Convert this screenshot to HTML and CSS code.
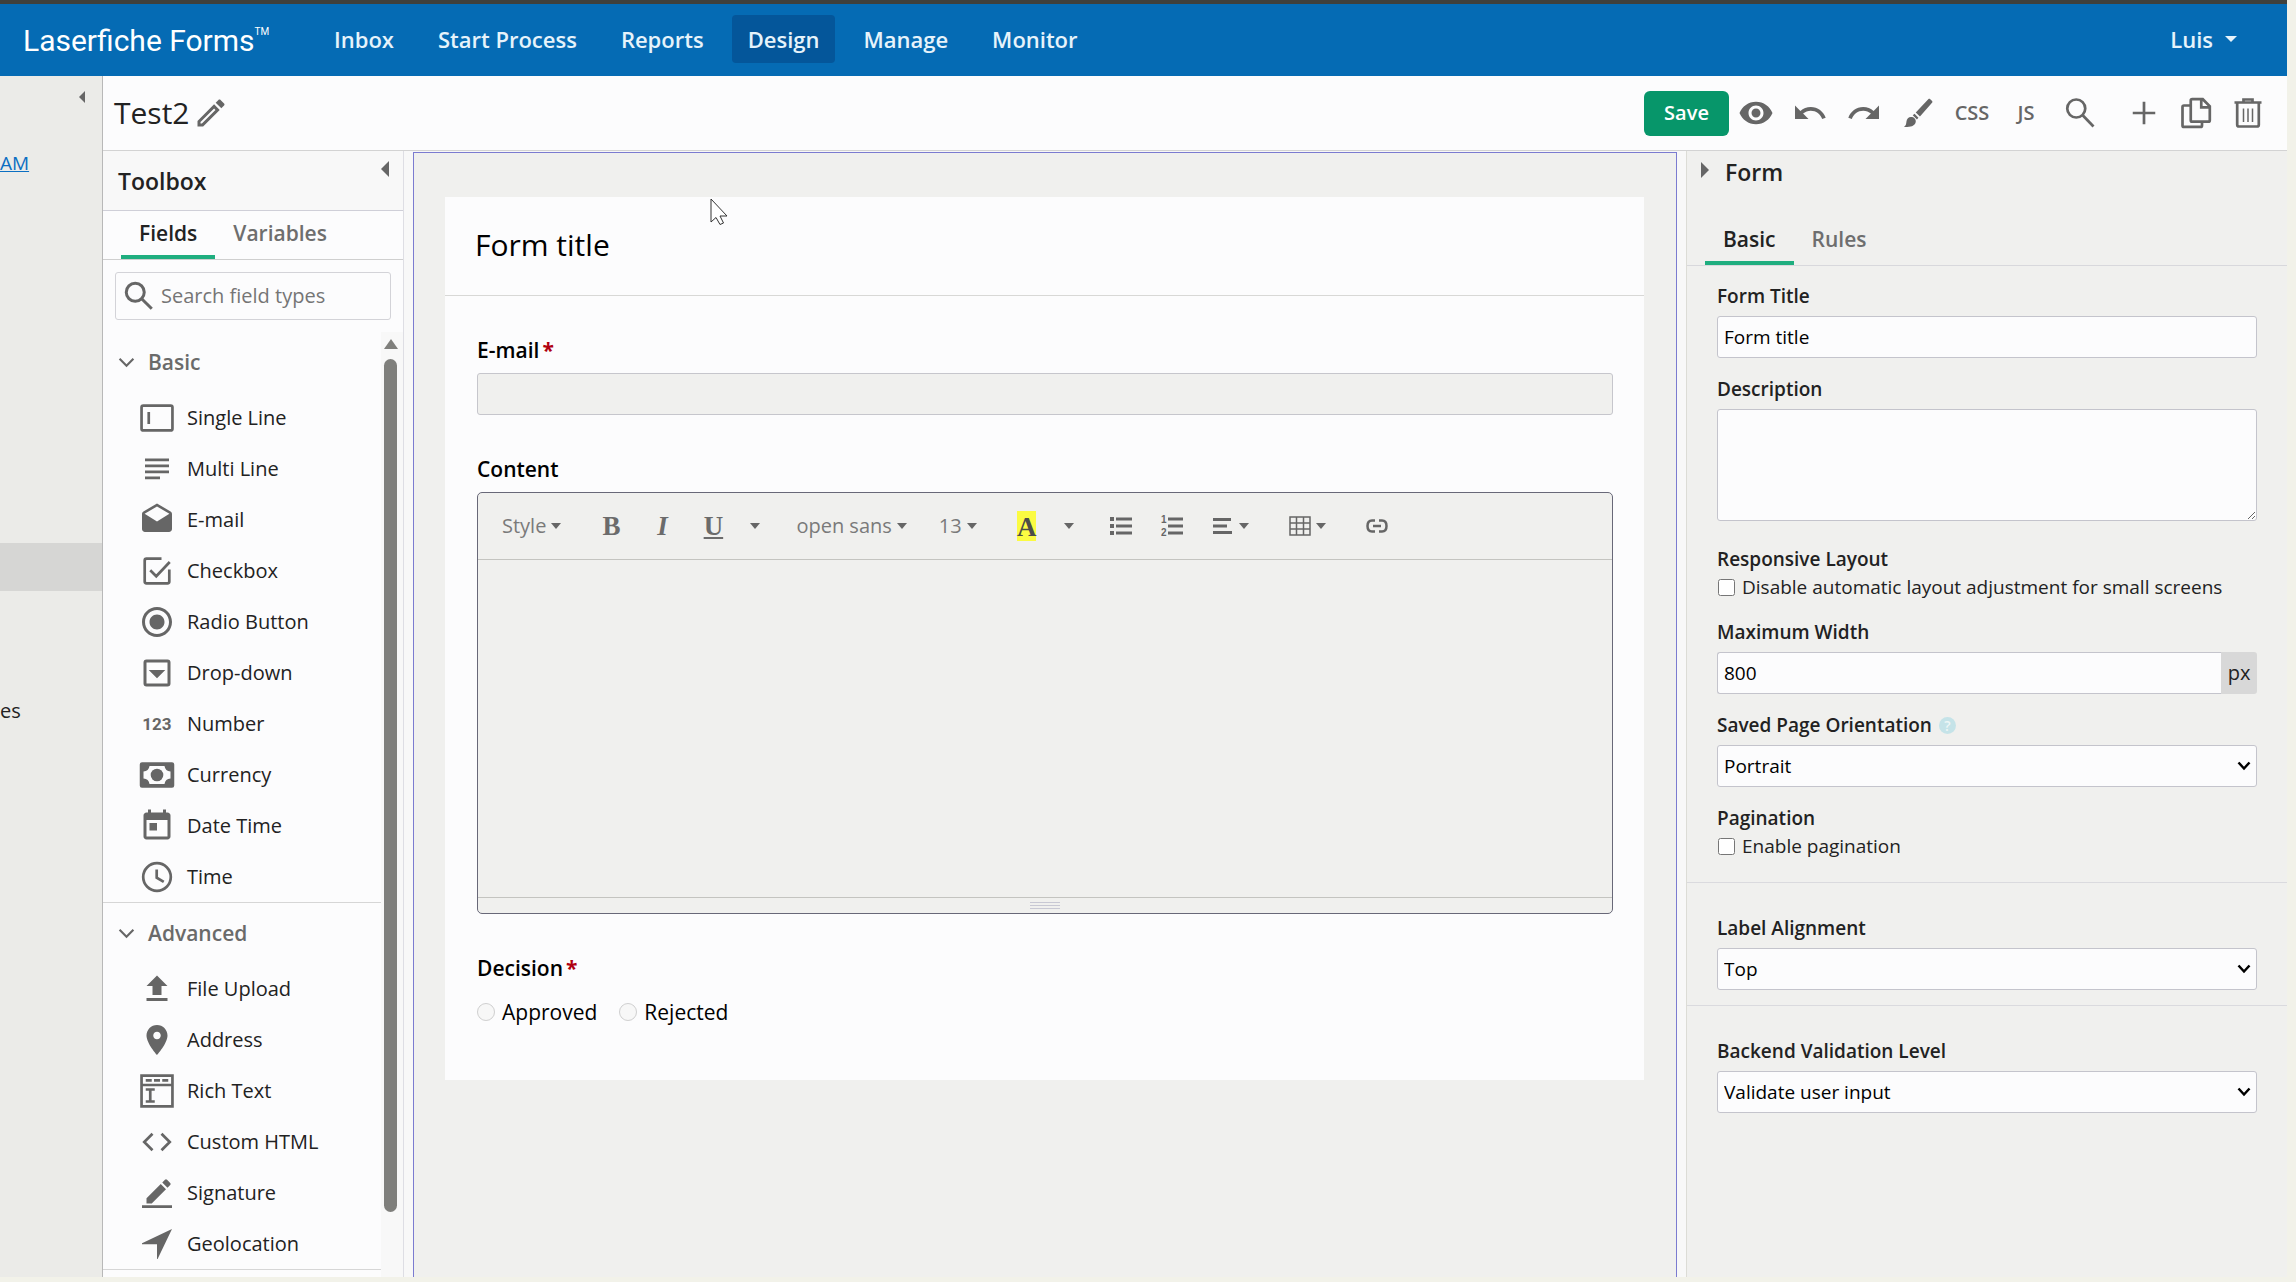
FILE: index.html
```html
<!DOCTYPE html>
<html lang="en">
<head>
    <meta charset="UTF-8">
    <meta name="viewport" content="width=device-width, initial-scale=1.0">
    <title>Laserfiche Forms - Test2</title>
    <link rel="stylesheet" href="styles.css">
</head>
<body>
    <div class="app">
        <header class="topbar">
            <a class="logo" href="#">Laserfiche Forms<sup>TM</sup></a>
            <nav class="nav">
                <a href="#">Inbox</a>
                <a href="#">Start Process</a>
                <a href="#">Reports</a>
                <a href="#" class="active">Design</a>
                <a href="#">Manage</a>
                <a href="#">Monitor</a>
            </nav>
            <button class="user">Luis <span class="caret"></span></button>
        </header>

        <div class="main">
            <!-- collapsed process list -->
            <aside class="drawer">
                <button class="arrow-left small" aria-label="Collapse"></button>
                <a class="drawer-link" href="#">AM</a>
                <div class="drawer-selected"></div>
                <span class="drawer-text">es</span>
            </aside>

            <div class="designer">
                <div class="titlebar">
                    <h1>Test2</h1>
                    <button class="icon-btn rename" aria-label="Rename">
                        <svg viewBox="0 0 24 24"><path d="M14.06 9.02l.92.92L5.92 19H5v-.92l9.06-9.06M17.66 3c-.25 0-.51.1-.7.29l-1.83 1.83 3.75 3.75 1.83-1.83c.39-.39.39-1.02 0-1.41l-2.34-2.34c-.2-.2-.45-.29-.71-.29zm-3.6 3.19L3 17.25V21h3.75L17.81 9.94l-3.75-3.75z"/></svg>
                    </button>
                    <div class="actions">
                        <button class="save">Save</button>
                        <button class="icon-btn" aria-label="Preview">
                            <svg viewBox="0 0 24 24"><path d="M12 4.5C7 4.5 2.73 7.61 1 12c1.73 4.39 6 7.5 11 7.5s9.27-3.11 11-7.5c-1.73-4.39-6-7.5-11-7.5zM12 17c-2.76 0-5-2.24-5-5s2.24-5 5-5 5 2.24 5 5-2.24 5-5 5zm0-8c-1.66 0-3 1.34-3 3s1.34 3 3 3 3-1.34 3-3-1.34-3-3-3z"/></svg>
                        </button>
                        <button class="icon-btn" aria-label="Undo">
                            <svg viewBox="0 0 24 24"><path d="M12.5 8c-2.65 0-5.05.99-6.9 2.6L2 7v9h9l-3.62-3.62c1.39-1.16 3.16-1.88 5.12-1.88 3.54 0 6.55 2.31 7.6 5.5l2.37-.78C21.08 11.03 17.15 8 12.5 8z"/></svg>
                        </button>
                        <button class="icon-btn" aria-label="Redo">
                            <svg viewBox="0 0 24 24"><path d="M18.4 10.6C16.55 8.99 14.15 8 11.5 8c-4.65 0-8.58 3.03-9.96 7.22L3.9 16c1.05-3.19 4.05-5.5 7.6-5.5 1.95 0 3.73.72 5.12 1.88L13 16h9V7l-3.6 3.6z"/></svg>
                        </button>
                        <button class="icon-btn" aria-label="Theme">
                            <svg viewBox="0 0 24 24"><path d="M20 2.600l1.400 1.400c.3.3.3.7.1 1l-8.200 9.400-2.800-2.800L19 2.700c.3-.3.700-.3 1-.1zM9.700 12.500l2.600 2.600-1 1.200-2.800-2.800zM7.300 14.600c2.100 0 3.500 1.400 3.200 3.300-.4 2.600-3 3.900-7.900 3.300 1.600-.9 1.500-2.100 1.700-3.500.2-1.900 1.400-3.100 3-3.100z"/></svg>
                        </button>
                        <button class="icon-btn">CSS</button>
                        <button class="icon-btn">JS</button>
                        <button class="icon-btn" aria-label="Search">
                            <svg viewBox="0 0 24 24" class="line"><circle cx="9.500" cy="9" r="6"/><path d="M13.800 13.500L21 21"/></svg>
                        </button>
                        <div class="page-actions">
                            <button class="icon-btn" aria-label="Add">
                                <svg viewBox="0 0 24 24" class="line"><path d="M12 4.500v15M4.500 12h15"/></svg>
                            </button>
                            <button class="icon-btn" aria-label="Copy">
                                <svg viewBox="0 0 24 24" class="line"><path d="M9.500 2.800h7l4.700 4.700v9.300q0 1-1 1H9.500q-1 0-1-1V3.800q0-1 1-1zM15.500 3v5.300H21M8.200 7H4q-1 0-1 1v12.300q0 1 1 1h11q1 0 1-1v-2"/></svg>
                            </button>
                            <button class="icon-btn" aria-label="Delete">
                                <svg viewBox="0 0 24 24" class="line"><path d="M3 5h18M9 4.500V3h6v1.500M4.800 5v14.800q0 1.200 1.200 1.200h12q1.200 0 1.200-1.200V5"/><path class="thin" d="M9 9v9M12 9v9M15 9v9"/></svg>
                            </button>
                        </div>
                    </div>
                </div>

                <div class="workspace">
                    <aside class="toolbox">
                        <div class="toolbox-head">
                            <h2>Toolbox</h2>
                            <button class="arrow-left" aria-label="Collapse toolbox"></button>
                        </div>
                        <div class="tabs toolbox-tabs">
                            <button class="tab active">Fields</button>
                            <button class="tab">Variables</button>
                        </div>
                        <div class="search">
                            <svg viewBox="0 0 24 24" class="line"><circle cx="9.500" cy="9.500" r="6"/><path d="M13.800 13.800L20.500 20.500"/></svg>
                            <input type="text" placeholder="Search field types" aria-label="Search field types">
                        </div>
                        <div class="field-scroll">
                            <div class="field-groups">
                                <section class="field-group">
                                    <h3><svg viewBox="0 0 16 10"><path d="M1.500 1.500L8 8l6.500-6.500"/></svg>Basic</h3>
                                    <ul>
                                        <li><svg viewBox="0 0 24 24" class="line"><rect x="1.700" y="3.700" width="20.600" height="16.600" rx="1.200"/><path d="M6.500 8v8"/></svg>Single Line</li>
                                        <li><svg viewBox="0 0 24 24"><path d="M4 5h16v1.800H4zM4 9h16v1.800H4zM4 13h16v1.800H4zM4 17h10v1.800H4z"/></svg>Multi Line</li>
                                        <li><svg viewBox="0 0 24 24"><path d="M21.990 8c0-.72-.37-1.350-.94-1.700L12 1 2.950 6.300C2.380 6.650 2 7.280 2 8v10c0 1.100.9 2 2 2h16c1.100 0 2-.9 2-2l-.01-10zM12 13L3.740 7.840 12 3l8.260 4.840L12 13z"/></svg>E-mail</li>
                                        <li><svg viewBox="0 0 24 24" class="line"><path d="M15 3.800H5q-1.200 0-1.200 1.200v14q0 1.200 1.200 1.200h14q1.200 0 1.200-1.200v-8M7.500 11.500l4 4L20.500 6"/></svg>Checkbox</li>
                                        <li><svg viewBox="0 0 24 24"><path d="M12 7c-2.760 0-5 2.240-5 5s2.240 5 5 5 5-2.240 5-5-2.240-5-5-5zm0-5C6.480 2 2 6.480 2 12s4.480 10 10 10 10-4.480 10-10S17.520 2 12 2zm0 18c-4.420 0-8-3.580-8-8s3.580-8 8-8 8 3.580 8 8-3.580 8-8 8z"/></svg>Radio Button</li>
                                        <li><svg viewBox="0 0 24 24"><path d="M5 3h14q2 0 2 2v14q0 2-2 2H5q-2 0-2-2V5q0-2 2-2zm0 2v14h14V5zM6.500 10h11L12 15.500z" fill-rule="evenodd"/></svg>Drop-down</li>
                                        <li><span class="num-icon">123</span>Number</li>
                                        <li><svg viewBox="0 0 24 24"><path fill-rule="evenodd" d="M2 3.500h20q1.500 0 1.500 1.500v14q0 1.500-1.500 1.500H2Q.5 20.500.5 19V5Q.5 3.500 2 3.500zM7 6Q6.500 9.500 3 9.700v4.600q3.500.2 4 3.700h10q.5-3.500 4-3.700V9.700q-3.500-.2-4-3.700z"/><circle cx="12" cy="12" r="4.200"/></svg>Currency</li>
                                        <li><svg viewBox="0 0 24 24"><path d="M19 3h-1V1h-2v2H8V1H6v2H5c-1.110 0-1.990.9-1.990 2L3 19c0 1.100.89 2 2 2h14c1.100 0 2-.9 2-2V5c0-1.100-.9-2-2-2zm0 16H5V8h14v11zM7 10h5v5H7z"/></svg>Date Time</li>
                                        <li><svg viewBox="0 0 24 24" class="line"><circle cx="12" cy="12" r="9.200"/><path d="M11.800 7v5.500l4.700 2.800"/></svg>Time</li>
                                    </ul>
                                </section>
                                <section class="field-group">
                                    <h3><svg viewBox="0 0 16 10"><path d="M1.500 1.500L8 8l6.500-6.500"/></svg>Advanced</h3>
                                    <ul>
                                        <li><svg viewBox="0 0 24 24"><path d="M9 16h6v-6h4l-7-7-7 7h4zM5 18h14v2H5z"/></svg>File Upload</li>
                                        <li><svg viewBox="0 0 24 24"><path d="M12 2C8.130 2 5 5.130 5 9c0 5.250 7 13 7 13s7-7.750 7-13c0-3.870-3.130-7-7-7zm0 9.500c-1.380 0-2.500-1.120-2.500-2.500s1.120-2.500 2.500-2.500 2.500 1.120 2.500 2.500-1.120 2.500-2.500 2.500z"/></svg>Address</li>
                                        <li><svg viewBox="0 0 24 24" class="line"><path d="M1.700 1.700h20.600v20.600H1.700zM1.700 8h20.600M4.500 4.900h4M10 4.900h4M15.500 4.900h4M4.500 11h6M4.500 19h6M7.500 11v8"/></svg>Rich Text</li>
                                        <li><svg viewBox="0 0 24 24" class="line"><path d="M9 6.500L3.500 12 9 17.500M15 6.500l5.500 5.500-5.500 5.500"/></svg>Custom HTML</li>
                                        <li><svg viewBox="0 0 24 24"><path d="M5 15.500V19h3.500L18 9.500 14.500 6zM15.500 5L17.300 3.200q.7-.7 1.400 0l2.100 2.100q.7.7 0 1.400L19 8.500zM2 20.200h20V22H2z"/></svg>Signature</li>
                                        <li><svg viewBox="0 0 24 24"><path d="M22 2L2 11.500v.6h10V22h.4z"/></svg>Geolocation</li>
                                    </ul>
                                </section>
                            </div>
                            <div class="scrollbar">
                                <span class="scroll-up"></span>
                                <span class="scroll-thumb"></span>
                            </div>
                        </div>
                    </aside>

                    <main class="canvas">
                        <form class="form-card">
                            <h2 class="form-title">Form title</h2>
                            <div class="form-body">
                                <div class="question">
                                    <label for="email">E-mail<span class="required">*</span></label>
                                    <input id="email" class="disabled-input" type="email" disabled>
                                </div>
                                <div class="question">
                                    <label for="content">Content</label>
                                    <div class="editor">
                                        <div class="editor-bar">
                                            <div class="tools"><button type="button">Style<span class="caret"></span></button></div>
                                            <div class="tools">
                                                <button type="button" class="glyph"><b>B</b></button>
                                                <button type="button" class="glyph"><i>I</i></button>
                                                <button type="button" class="glyph"><u>U</u></button>
                                                <button type="button" class="more" aria-label="More styles"><span class="caret"></span></button>
                                            </div>
                                            <div class="tools"><button type="button">open sans<span class="caret"></span></button></div>
                                            <div class="tools"><button type="button">13<span class="caret"></span></button></div>
                                            <div class="tools">
                                                <button type="button" class="glyph"><mark>A</mark></button>
                                                <button type="button" class="more" aria-label="More colors"><span class="caret"></span></button>
                                            </div>
                                            <div class="tools lists">
                                                <button type="button" aria-label="Bulleted list"><svg viewBox="0 0 22 22"><path d="M0 2h4v4H0zM0 9h4v4H0zM0 16h4v4H0zM6 2.500h16v3H6zM6 9.500h16v3H6zM6 16.500h16v3H6z"/></svg></button>
                                                <button type="button" aria-label="Numbered list"><svg viewBox="0 0 22 22"><path d="M7 2.500h15v3H7zM7 9.500h15v3H7zM7 16.500h15v3H7z"/><text x="0" y="8">1</text><text x="0" y="21">2</text></svg></button>
                                                <button type="button" aria-label="Align"><svg viewBox="0 0 22 22"><path d="M1 3h18v3H1zM1 9.500h14v3H1zM1 16h19v3H1z"/></svg><span class="caret"></span></button>
                                            </div>
                                            <div class="tools wide"><button type="button" aria-label="Table"><svg viewBox="0 0 22 22"><path d="M1 2h20v18H1zM1 8h20M1 14h20M7.500 2v18M14.500 2v18" class="grid-line"/></svg><span class="caret"></span></button></div>
                                            <div class="tools wide"><button type="button" aria-label="Link"><svg viewBox="0 0 22 22"><path class="link-line" d="M9 5.500H6Q1.500 5.500 1.500 11T6 16.500h3M13 5.500h3q4.500 0 4.500 5.500T16 16.500h-3M7 11h8"/></svg></button></div>
                                        </div>
                                        <textarea id="content" disabled></textarea>
                                        <div class="editor-grip"><span></span></div>
                                    </div>
                                </div>
                                <fieldset class="question decision">
                                    <legend>Decision<span class="required">*</span></legend>
                                    <div class="radios">
                                        <label><input type="radio" name="decision" disabled>Approved</label>
                                        <label><input type="radio" name="decision" disabled>Rejected</label>
                                    </div>
                                </fieldset>
                            </div>
                        </form>
                    </main>

                    <aside class="props">
                        <div class="props-head">
                            <button class="arrow-right" aria-label="Collapse properties"></button>
                            <h2>Form</h2>
                        </div>
                        <div class="tabs props-tabs">
                            <button class="tab active">Basic</button>
                            <button class="tab">Rules</button>
                        </div>
                        <div class="props-section first">
                            <div class="prop">
                                <label for="title">Form Title</label>
                                <input id="title" type="text" value="Form title">
                            </div>
                            <div class="prop">
                                <label for="desc">Description</label>
                                <textarea id="desc"></textarea>
                            </div>
                            <div class="prop check-prop">
                                <span class="prop-label">Responsive Layout</span>
                                <label class="check"><input type="checkbox">Disable automatic layout adjustment for small screens</label>
                            </div>
                            <div class="prop">
                                <label for="width">Maximum Width</label>
                                <div class="with-unit">
                                    <input id="width" type="text" value="800">
                                    <span>px</span>
                                </div>
                            </div>
                            <div class="prop">
                                <label for="orient">Saved Page Orientation<span class="help">?</span></label>
                                <select id="orient"><option>Portrait</option><option>Landscape</option></select>
                            </div>
                            <div class="prop check-prop">
                                <span class="prop-label">Pagination</span>
                                <label class="check"><input type="checkbox">Enable pagination</label>
                            </div>
                        </div>
                        <div class="props-section middle">
                            <div class="prop">
                                <label for="align">Label Alignment</label>
                                <select id="align"><option>Top</option><option>Left</option></select>
                            </div>
                        </div>
                        <div class="props-section last">
                            <div class="prop">
                                <label for="level">Backend Validation Level</label>
                                <select id="level"><option>Validate user input</option></select>
                            </div>
                        </div>
                    </aside>
                </div>
            </div>
        </div>
    </div>

    <svg class="pointer" viewBox="0 0 18 28"><path d="M1 1v23l5-4.500 4 7 3.500-1.500-3.500-7H17z"/></svg>
</body>
</html>
```
FILE: styles.css
```css
* {
    margin: 0;
    padding: 0;
    box-sizing: border-box;
}

body {
    font-family: "Open Sans", "Noto Sans", sans-serif;
    font-size: 20px;
    line-height: 28px;
    color: #222;
    background: #f2f2e9;
}

button, input, select, textarea {
    font: inherit;
    color: inherit;
}

button {
    border: none;
    background: none;
    cursor: pointer;
}

h1, h2, h3 {
    font-weight: 400;
}

ul {
    list-style: none;
}

svg {
    fill: #666;
    flex: none;
}

svg.line {
    fill: none;
    stroke: #666;
    stroke-width: 1.8;
}

.app {
    height: 100vh;
    padding: 0 9px 5px 0;
    display: flex;
    flex-direction: column;
    overflow: hidden;
}

.caret {
    display: inline-block;
    border: 5px solid transparent;
    border-top: 6px solid #666;
    border-bottom: none;
}

/* top navigation */
.topbar {
    flex: none;
    height: 76px;
    display: flex;
    align-items: center;
    padding: 0 0 2px 23px;
    border-top: 4px solid #3f403c;
    background: #056bb4;
    color: #e6f3fb;
    font-size: 22px;
}

.logo {
    font-family: Roboto, sans-serif;
    font-size: 30px;
    color: #fff;
    text-decoration: none;
    width: 295px;
    padding-top: 4px;
    white-space: nowrap;
}

.logo sup {
    font-size: 10px;
    vertical-align: 16px;
    line-height: 0;
}

.nav {
    display: flex;
    gap: 12px;
}

.nav a {
    padding: 8px 16px;
    line-height: 32px;
    border-radius: 4px;
    font-weight: 600;
    color: inherit;
    text-decoration: none;
}

.nav .active {
    background: #04569a;
}

.user {
    margin-left: auto;
    padding-right: 50px;
    font-weight: 600;
    display: flex;
    align-items: center;
    gap: 12px;
}

.user .caret {
    border-width: 6px 6px 0;
    border-top-color: #e6f3fb;
}

.main {
    flex: 1;
    min-height: 0;
    display: flex;
}

/* strip of the process list that stays visible */
.drawer {
    width: 103px;
    flex: none;
    display: flex;
    flex-direction: column;
    background: #ebebe8;
    border-right: 1px solid #b8b8b8;
}

.arrow-left, .arrow-right {
    width: 8px;
    height: 16px;
    background: #666;
}

.arrow-left {
    clip-path: polygon(100% 0, 100% 100%, 0 50%);
}

.arrow-right {
    clip-path: polygon(0 0, 100% 50%, 0 100%);
}

.arrow-left.small {
    width: 6px;
    height: 12px;
    margin: 15px 17px 46px auto;
}

.drawer-link {
    font-size: 19px;
    color: #0b6fc2;
}

.drawer-selected {
    height: 48px;
    margin: 366px 0 106px;
    background: #d6d6d4;
}

.designer {
    flex: 1;
    min-width: 0;
    display: flex;
    flex-direction: column;
}

.titlebar {
    flex: none;
    height: 75px;
    display: flex;
    align-items: center;
    padding: 0 13px 0 11px;
    background: #fcfcfd;
    border-bottom: 1px solid #d3d3d3;
}

.titlebar h1 {
    font-size: 30px;
    margin-right: 3px;
}

.actions {
    margin-left: auto;
    display: flex;
    align-items: center;
}

.save {
    width: 85px;
    height: 45px;
    border-radius: 6px;
    background: #07966a;
    color: #fff;
    font-weight: 600;
}

.icon-btn {
    width: 54px;
    height: 54px;
    display: flex;
    align-items: center;
    justify-content: center;
    font-weight: 600;
    color: #666;
}

.icon-btn svg {
    width: 36px;
    height: 36px;
}

.rename {
    width: 36px;
}

.page-actions {
    display: flex;
    margin-left: 11px;
}

.page-actions .icon-btn {
    width: 52px;
}

.icon-btn .thin {
    stroke-width: 1;
}

.workspace {
    flex: 1;
    min-height: 0;
    display: flex;
    background: #f8f8f8;
}

/* toolbox */
.toolbox {
    width: 301px;
    flex: none;
    display: flex;
    flex-direction: column;
    background: #fcfcfd;
    border-right: 1px solid #dedee4;
}

.toolbox-head {
    height: 60px;
    display: flex;
    justify-content: space-between;
    align-items: center;
    padding: 0 14px 0 15px;
    background: #f8f8f8;
    border-bottom: 1px solid #cfcfd8;
}

.toolbox-head h2, .props-head h2 {
    font-size: 23px;
    font-weight: 600;
}

.toolbox-head .arrow-left {
    align-self: flex-start;
    margin-top: 10px;
}

.tabs {
    display: flex;
    border-bottom: 1px solid #cfcfcf;
}

.tab {
    padding: 0 18px;
    font-size: 21px;
    font-weight: 600;
    color: #6e6e6e;
    border-bottom: 4px solid transparent;
}

.tab.active {
    color: #222;
    border-bottom-color: #1fae7f;
}

.toolbox-tabs {
    height: 49px;
    padding-left: 18px;
}

.search {
    height: 48px;
    margin: 12px;
    display: flex;
    align-items: center;
    border: 1px solid #d3d3d8;
    border-radius: 3px;
}

.search svg {
    width: 36px;
    height: 36px;
    margin: 0 4px 0 5px;
    stroke-width: 2;
}

.search input {
    flex: 1;
    min-width: 0;
    border: none;
    outline: none;
    background: none;
}

.search input::placeholder {
    color: #757575;
}

.field-scroll {
    flex: 1;
    min-height: 0;
    display: flex;
}

.field-groups {
    flex: 1;
}

.field-group {
    border-bottom: 1px solid #d6d6d6;
}

.field-group h3 {
    height: 60px;
    display: flex;
    align-items: center;
    gap: 13px;
    padding-left: 15px;
    font-size: 21px;
    font-weight: 600;
    color: #6a6a6a;
}

.field-group h3 svg {
    width: 17px;
    height: 11px;
    fill: none;
    stroke: #666;
    stroke-width: 2;
}

.field-group li {
    height: 51px;
    display: flex;
    align-items: center;
    gap: 12px;
    padding-left: 36px;
}

.field-group li svg, .num-icon {
    width: 36px;
    height: 36px;
}

.num-icon {
    font-family: Roboto, sans-serif;
    font-size: 17px;
    font-weight: 700;
    line-height: 36px;
    text-align: center;
    color: #666;
}

.scrollbar {
    width: 22px;
    display: flex;
    flex-direction: column;
    align-items: center;
    gap: 10px;
    padding: 7px 3px 65px 0;
    background: #f8f8f8;
}

.scroll-up {
    border: 7px solid transparent;
    border-top: none;
    border-bottom: 10px solid #7f7f7c;
}

.scroll-thumb {
    flex: 1;
    width: 13px;
    border-radius: 7px;
    background: #7f7f7c;
}

/* form canvas */
.canvas {
    flex: 1;
    min-width: 0;
    margin: 1px 9px 0;
    padding: 44px 32px 0 31px;
    border: 1px solid #7b7bd0;
    border-bottom: none;
    background: #f0f0ee;
}

.form-card {
    background: #fcfcfd;
    color: #000;
}

.form-title {
    height: 99px;
    padding: 0 30px;
    font-size: 30px;
    line-height: 96px;
    border-bottom: 1px solid #d8d8d6;
}

.form-body {
    padding: 38px 31px 52px 32px;
    display: flex;
    flex-direction: column;
    gap: 38px;
}

.question {
    display: flex;
    flex-direction: column;
    gap: 7px;
    border: none;
}

.question > label, .question legend {
    font-size: 21px;
    line-height: 32px;
    font-weight: 600;
}

.required {
    color: #b00010;
    font-weight: 700;
    margin-left: 3px;
}

.disabled-input {
    height: 42px;
    border: 1px solid #c6c6cc;
    border-radius: 3px;
    background: #f0f0ee;
}

.editor {
    border: 1px solid #686878;
    border-radius: 5px;
    background: #f0f0ee;
    color: #7a7a7a;
}

.editor-bar {
    height: 67px;
    display: flex;
    align-items: center;
    gap: 32px;
    padding-left: 24px;
    border-bottom: 1px solid #c4c4c0;
}

.tools {
    display: flex;
    gap: 15px;
}

.tools.lists {
    gap: 29px;
}

.tools.wide {
    margin-left: 8px;
}

.tools button {
    display: flex;
    align-items: center;
    gap: 5px;
}

.tools svg {
    width: 22px;
    height: 22px;
}

.tools text {
    font-family: "Liberation Sans", sans-serif;
    font-size: 10px;
    font-weight: 700;
}

.tools .glyph {
    width: 36px;
    justify-content: center;
    font-family: "Liberation Serif", serif;
    font-size: 27px;
    font-weight: 700;
    color: #6b6b6b;
}

.tools .more {
    width: 18px;
    justify-content: center;
}

.tools mark {
    height: 30px;
    line-height: 32px;
    background: #fbfb42;
    color: #4d4d48;
}

.grid-line, .link-line {
    fill: none;
    stroke: #666;
    stroke-width: 1.5;
}

.link-line {
    stroke-width: 2.5;
}

.editor textarea {
    display: block;
    width: 100%;
    height: 337px;
    border: none;
    resize: none;
    background: none;
}

.editor-grip {
    height: 16px;
    display: flex;
    align-items: center;
    justify-content: center;
    border-top: 1px solid #c4c4c0;
}

.editor-grip span {
    width: 30px;
    height: 7px;
    border: 1px solid #c8c8d4;
    border-width: 1px 0;
    background: linear-gradient(#f0f0ee 2px, #c8c8d4 2px, #c8c8d4 3px, #f0f0ee 3px);
}

.radios {
    display: flex;
    gap: 22px;
    padding-top: 12px;
    font-size: 21px;
    line-height: 32px;
}

.radios label {
    display: flex;
    align-items: center;
    gap: 7px;
}

.radios input {
    width: 18px;
    height: 18px;
}

/* properties */
.props {
    width: 601px;
    flex: none;
    background: #f0f0ee;
    border-left: 1px solid #dcdcd6;
}

.props-head {
    height: 65px;
    display: flex;
    align-items: flex-start;
    gap: 16px;
    padding: 7px 14px;
}

.props-head .arrow-right {
    margin-top: 4px;
}

.props-tabs {
    height: 50px;
    padding-left: 18px;
    border-color: #d8d8dc;
}

.props-section {
    padding: 0 30px;
    display: flex;
    flex-direction: column;
    gap: 17px;
    border-bottom: 1px solid #dadade;
}

.props-section.first {
    padding-top: 16px;
    padding-bottom: 22px;
}

.props-section.middle {
    padding-top: 31px;
    padding-bottom: 15px;
}

.props-section.last {
    padding-top: 31px;
    border: none;
}

.prop {
    display: flex;
    flex-direction: column;
    gap: 6px;
}

.prop > label, .prop-label {
    font-size: 19px;
    font-weight: 600;
}

.check-prop {
    gap: 0;
}

.prop > .check {
    display: flex;
    align-items: center;
    gap: 7px;
    font-weight: 400;
}

.check input {
    width: 17px;
    height: 17px;
    margin-left: 1px;
}

.prop input[type="text"], .prop select, .prop > textarea {
    width: 100%;
    height: 42px;
    padding: 0 6px;
    font-size: 19px;
    color: #000;
    border: 1px solid #c4c4cc;
    border-radius: 3px;
    background: #fcfcfd;
}

.prop > textarea {
    height: 112px;
    margin-bottom: 7px;
}

.prop select {
    appearance: none;
    background: #fcfcfd url("data:image/svg+xml,%3Csvg xmlns='http://www.w3.org/2000/svg' width='14' height='10'%3E%3Cpath d='M1.500 1.500L7 7.500l5.500-6' fill='none' stroke='%23000' stroke-width='2.500'/%3E%3C/svg%3E") no-repeat right 5px center;
}

.with-unit {
    display: flex;
}

.with-unit span {
    width: 36px;
    line-height: 42px;
    text-align: center;
    background: #d8d8d8;
    border-radius: 0 3px 3px 0;
}

.with-unit input[type="text"] {
    flex: 1;
    border-right: none;
    border-radius: 3px 0 0 3px;
}

.help {
    display: inline-block;
    width: 17px;
    height: 17px;
    margin-left: 7px;
    border-radius: 50%;
    background: #c5e3e8;
    color: #eef6f6;
    font-size: 14px;
    line-height: 17px;
    text-align: center;
    vertical-align: 1px;
}

.pointer {
    position: absolute;
    left: 710px;
    top: 198px;
    width: 18px;
    height: 28px;
    fill: #fff;
    stroke: #333;
}
```
